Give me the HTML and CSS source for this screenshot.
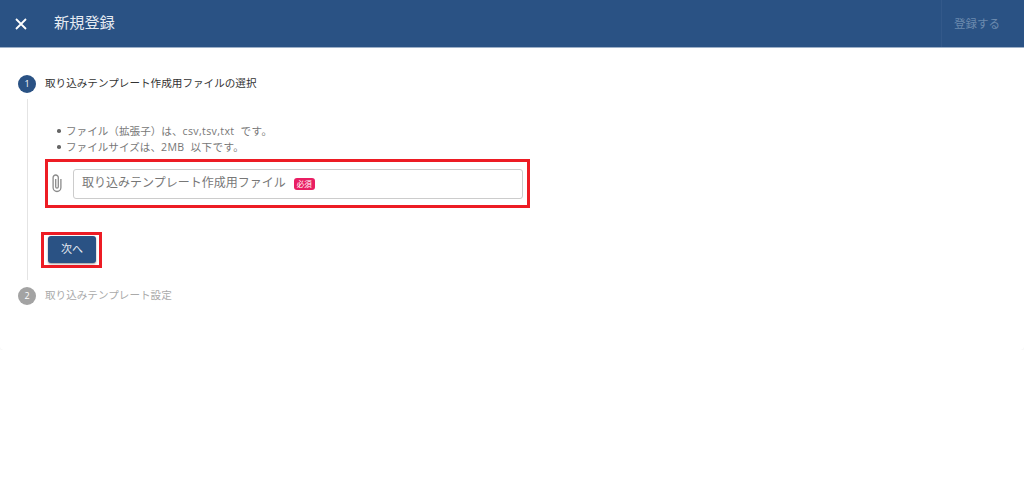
FILE: index.html
```html
<!DOCTYPE html>
<html lang="ja">
<head>
    <meta charset="UTF-8">
    <meta name="viewport" content="width=device-width, initial-scale=1.0">
    <title>新規登録</title>
    <link rel="stylesheet" href="styles.css">
</head>
<body>
    <!-- Header -->
    <header class="header">
        <button class="close-btn" aria-label="閉じる">
            <svg width="14" height="14" viewBox="0 0 14 14"><path d="M2 2 L12 12 M12 2 L2 12" stroke="#fff" stroke-width="1.8" fill="none"/></svg>
        </button>
        <h1 class="header-title">新規登録</h1>
        <button class="submit-btn" disabled>登録する</button>
    </header>

    <!-- Stepper -->
    <main class="card">
        <div class="step-head">
            <span class="step-num">1</span>
            <span class="step-label">取り込みテンプレート作成用ファイルの選択</span>
        </div>
        <div class="step-body">
            <ul class="notes">
                <li><span>ファイル（拡張子）は、<span class="latin">csv,tsv,txt です。</span></span></li>
                <li><span>ファイルサイズは、<span class="latin">2MB 以下です。</span></span></li>
            </ul>
            <div class="file-field">
                <svg class="clip" width="10" height="19" viewBox="0 0 10 19"><path d="M8.9 5 V13.6 A3.9 3.9 0 0 1 1.1 13.6 V3.6 A2.6 2.6 0 0 1 6.3 3.6 V12.8 A1.3 1.3 0 0 1 3.7 12.8 V5" stroke="#8a8a8a" stroke-width="1.3" fill="none"/></svg>
                <div class="file-input">
                    <span class="file-text">取り込みテンプレート作成用ファイル</span>
                    <span class="required">必須</span>
                </div>
            </div>
            <div class="next-wrap">
                <button class="next-btn">次へ</button>
            </div>
        </div>
        <div class="step-head step-off">
            <span class="step-num">2</span>
            <span class="step-label">取り込みテンプレート設定</span>
        </div>
    </main>
</body>
</html>
```

FILE: styles.css
```css
* {
    margin: 0;
    padding: 0;
    box-sizing: border-box;
}

body {
    font-family: "Open Sans", "Noto Sans CJK JP", sans-serif;
    background: #fff;
    color: #333;
}

button {
    font-family: inherit;
    border: none;
    background: none;
}

.header {
    height: 48px;
    display: flex;
    align-items: stretch;
    background: #2a5284;
    border-bottom: 1px solid #9db0c8;
    color: #fff;
}

.close-btn {
    width: 42px;
    display: flex;
    align-items: center;
    justify-content: center;
}

.header-title {
    flex: 1;
    margin-left: 12px;
    padding-bottom: 2px;
    font-size: 15.2px;
    font-weight: 400;
    line-height: 44px;
    color: #e6ebf2;
}

.submit-btn {
    width: 83px;
    padding: 0 12px 2px 0;
    border-left: 1px solid #33598a;
    font-size: 11.5px;
    color: #6c8aae;
}

.card {
    height: 302px;
    padding: 27px 18px 0;
    border-radius: 0 0 4px 4px;
    box-shadow: 0 1px 2px rgba(0, 0, 0, 0.06);
}

.step-head {
    display: flex;
    align-items: center;
    height: 18px;
}

.step-num {
    width: 18px;
    height: 18px;
    margin-right: 9px;
    border-radius: 50%;
    background: #2a5284;
    color: #fff;
    font-size: 9px;
    line-height: 18px;
    text-align: center;
}

.step-label {
    padding-bottom: 3px;
    font-size: 10.6px;
    color: #333;
}

.step-off .step-num {
    background: #a3a3a3;
}

.step-off .step-label {
    color: #aaa;
}

.step-body {
    margin: 6px 0 7px 9px;
    padding: 24px 0 12px 17px;
    border-left: 1px solid #e4e4e4;
}

.notes {
    padding-left: 12px;
    list-style: none;
    font-size: 10.6px;
    line-height: 16px;
    color: #777;
}

.notes li {
    display: flex;
    align-items: center;
}

.notes li::before {
    content: "";
    width: 3.5px;
    height: 3.5px;
    margin-right: 5.5px;
    border-radius: 50%;
    background: #666;
}

.latin {
    word-spacing: 3px;
    letter-spacing: 0.35px;
}

.file-field {
    width: 485px;
    height: 49px;
    margin-top: 4px;
    padding: 0 4px 0 4px;
    display: flex;
    align-items: center;
    border: 3px solid #ed1c24;
}

.clip {
    flex: none;
    margin-right: 11px;
}

.file-input {
    flex: 1;
    height: 30px;
    padding-left: 8px;
    display: flex;
    align-items: center;
    border: 1px solid #ccc;
    border-radius: 3px;
    font-size: 12px;
    color: #777;
}

.file-text {
    padding-bottom: 3px;
}

.required {
    margin-left: 8px;
    padding: 0 3px;
    border-radius: 3px;
    background: #e91e63;
    color: #fff;
    font-size: 7.5px;
    line-height: 12px;
}

.next-wrap {
    width: 61px;
    height: 36px;
    margin: 24px 0 0 -4px;
    padding: 1px 4px;
    border: 3px solid #ed1c24;
}

.next-btn {
    display: block;
    width: 48px;
    height: 27px;
    padding-bottom: 3px;
    border-radius: 3px;
    background: #2a5284;
    box-shadow: 0 1px 2px rgba(0, 0, 0, 0.4);
    color: #e6ebf2;
    font-size: 11px;
}
```
